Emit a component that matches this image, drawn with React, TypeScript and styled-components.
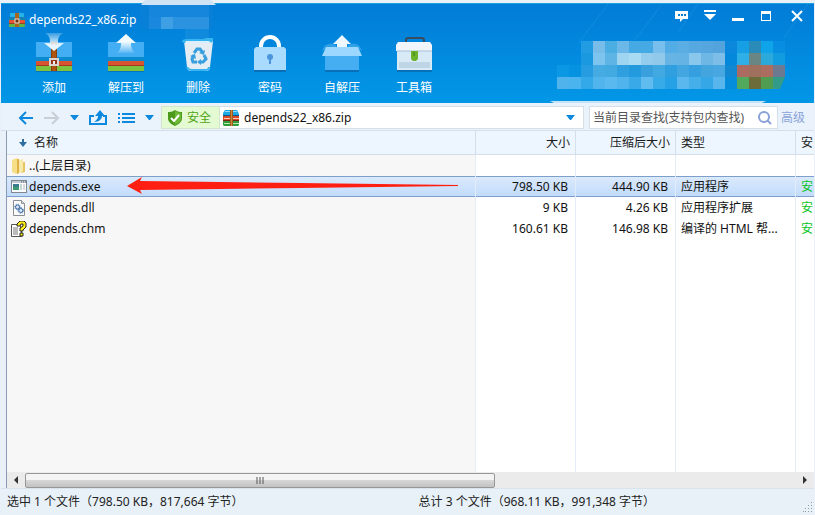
import React from "react";
import styled, { createGlobalStyle } from "styled-components";

const Global = createGlobalStyle`
  * { box-sizing: border-box; }
  html, body, #root { height: 100%; }
  body {
    margin: 0;
    background: #e9f0f8;
    font: 12px/20px "Noto Sans", "Noto Sans CJK SC", sans-serif;
    color: #1a1a1a;
  }
  button, input { font: inherit; color: inherit; border: 0; padding: 0; background: none; }
  svg { display: block; flex: none; }
`;

const Window = styled.div`
  min-height: 100vh;
  display: flex;
  flex-direction: column;
  padding: 3px 1px 0;
  overflow: hidden;
`;

const Header = styled.header`
  position: relative;
  height: 100px;
  flex: none;
  background: linear-gradient(#027cd7, #0297e6);
  border-top: 1px solid #1aa0e0;
  color: #fff;
`;

const HeaderArt = styled.svg<{ $side: "left" | "right" }>`
  position: absolute;
  top: -4px;
  ${(p) => (p.$side === "left" ? "left: 139px;" : "right: -1px;")}
  pointer-events: none;
`;

const TitleBar = styled.div`
  position: relative;
  display: flex;
  justify-content: space-between;
  padding-left: 8px;
  height: 29px;
`;

const Title = styled.h1`
  margin: 0;
  display: flex;
  align-items: center;
  gap: 4px;
  padding-top: 2px;
  font: inherit;
`;

const WindowButtons = styled.div`
  display: flex;
`;

const WindowButton = styled.button<{ $w?: number }>`
  width: ${(p) => p.$w ?? 28}px;
  height: 23px;
  display: grid;
  place-items: center;
`;

const Tools = styled.nav`
  position: relative;
  display: flex;
  padding-left: 17px;
`;

const Tool = styled.button`
  width: 72px;
  display: flex;
  flex-direction: column;
  align-items: center;
  gap: 3px;
`;

const PathBar = styled.div`
  display: flex;
  align-items: center;
  height: 28px;
  flex: none;
  padding: 3px 0 1px 17px;
  background: #eaf3fc;
  border-bottom: 1px solid #d5dfe9;
`;

const NavButtons = styled.div`
  width: 143px;
  display: flex;
  justify-content: space-between;
  padding-right: 7px;
`;

const NavButton = styled.button`
  height: 20px;
  display: grid;
  place-items: center;
`;

const Safe = styled.div`
  width: 59px;
  height: 23px;
  display: flex;
  align-items: center;
  gap: 4px;
  padding-left: 5px;
  background: #e3fad3;
  border: 1px solid #d3e6cd;
  color: #51a412;
`;

const Address = styled.div`
  flex: 1;
  min-width: 0;
  height: 23px;
  display: flex;
  align-items: center;
  gap: 5px;
  padding: 0 8px 0 3px;
  background: #fff;
  border: 1px solid #d5dfe9;
  border-left: 0;
`;

const AddressInput = styled.input`
  flex: 1;
  min-width: 0;
  color: #111;
  outline: 0;
`;

const Search = styled.label`
  width: 189px;
  height: 23px;
  margin-left: 5px;
  display: flex;
  align-items: center;
  padding: 0 5px 0 3px;
  background: #fff;
  border: 1px solid #d5dfe9;
`;

const SearchInput = styled.input`
  flex: 1;
  min-width: 0;
  outline: 0;
  &::placeholder { color: #555; opacity: 1; }
`;

const Advanced = styled.a`
  margin: 0 9px 0 3px;
  color: #8ba2d8;
  text-decoration: none;
`;

const Pane = styled.main`
  position: relative;
  flex: 1;
  display: flex;
  flex-direction: column;
  margin-left: 5px;
  border-left: 1px solid #8a9bb5;
  overflow: hidden;
  background: #fff;
`;

const Files = styled.table`
  flex: 1;
  width: 100%;
  display: flex;
  flex-direction: column;
`;

const Line = styled.tr<{ $kind?: "head" | "selected" | "fill" }>`
  display: grid;
  grid-template-columns: minmax(0, 1fr) 100px 100px 120px 18px;
  height: ${(p) => (p.$kind === "head" ? 24 : 21)}px;
  ${(p) => p.$kind === "head" && "background: #edf5fe; border-bottom: 1px solid #d5dfe9;"}
  ${(p) =>
    p.$kind === "selected" &&
    `background: linear-gradient(#dceafc, #c1dbfc);
     box-shadow: inset 0 1px #7d9fcc, inset 0 -1px #7d9fcc;`}
  ${(p) => p.$kind === "fill" && "height: auto; flex: 1;"}
`;

const Body = styled.tbody`
  flex: 1;
  display: flex;
  flex-direction: column;
`;

const HeadCell = styled.th<{ $right?: boolean }>`
  padding: 2px 5px 0;
  font-weight: 400;
  text-align: ${(p) => (p.$right ? "right" : "left")};
  border-right: 1px solid #d5dfe9;
  white-space: nowrap;
  &:last-child { border-right: 0; padding-right: 0; }
`;

const SortLabel = styled.span`
  display: flex;
  align-items: center;
  gap: 7px;
  padding-left: 7px;
`;

const Cell = styled.td<{ $right?: boolean; $shade?: boolean; $green?: boolean }>`
  padding: 1px ${(p) => (p.$right ? 7 : 5)}px 0;
  text-align: ${(p) => (p.$right ? "right" : "left")};
  background: ${(p) => (p.$shade ? "#f7f7f7" : "none")};
  color: ${(p) => (p.$green ? "#08c31c" : "#111")};
  border-right: 1px solid #e2ecf8;
  white-space: nowrap;
  &:last-child { border-right: 0; padding-right: 0; }
`;

const FileName = styled.span`
  display: flex;
  align-items: center;
  gap: 2px;
  margin-left: -1px;
  height: 20px;
`;

const Arrow = styled.svg`
  position: absolute;
  left: 119px;
  top: 46px;
`;

const ScrollBar = styled.div`
  display: flex;
  align-items: center;
  height: 16px;
  flex: none;
  background: #ebebeb;
`;

const ScrollButton = styled.button`
  width: 18px;
  height: 16px;
  display: grid;
  place-items: center;
`;

const Track = styled.div`
  flex: 1;
`;

const Thumb = styled.div`
  width: 61%;
  height: 15px;
  display: grid;
  place-items: center;
  border: 1px solid #979797;
  border-radius: 2px;
  background: linear-gradient(#f4f4f4 45%, #d6d6d6 50%, #c2c2c2);
`;

const Status = styled.footer`
  display: grid;
  grid-template-columns: 51% 1fr;
  position: relative;
  height: 27px;
  flex: none;
  padding: 3px 0 3px 6px;
  border-top: 1px solid #d8e3ee;
  color: #222;
  background: #e8f1f8;
`;

const StatusText = styled.span`
  white-space: nowrap;
`;

const Grip = styled.svg`
  position: absolute;
  right: 1px;
  bottom: 3px;
`;

const blue = "#0d8ae0";

const Box = ({ strap }: { strap?: boolean }) => (
  <g>
    <rect x="2" y="38" width="36" height="1" fill="#075fa8" opacity=".6" />
    <rect x="2" y="9" width="36" height="16" fill="#43aef3" />
    <rect x="2" y="24" width="36" height="4" fill="#0b8bcf" />
    <rect x="2" y="28" width="36" height="4" fill="#d8532f" />
    <rect x="2" y="32" width="36" height="1" fill="#a33a20" />
    <rect x="2" y="33" width="36" height="5" fill="#7dc43e" />
    {strap && (
      <>
        <rect x="17" y="9" width="6" height="29" fill="#ad5510" />
        <path d="M17 9h1v29h-1ZM22 9h1v29h-1Z" fill="#8a400c" />
        <rect x="16" y="26" width="8" height="6" fill="#94351c" stroke="#dcd6d2" strokeWidth="2" />
        <rect x="19" y="28" width="2" height="3" fill="#eee" />
      </>
    )}
  </g>
);

const toolIcons: Record<string, React.ReactNode> = {
  添加: (
    <>
      <Box strap />
      <path d="M11 0h18c-5 3-5 6-5 10h6L20 18 10 10h6c0-4 0-7-5-10Z" fill="url(#fadeDown)" />
    </>
  ),
  解压到: (
    <>
      <Box />
      <path d="M20 1 30 10h-5c0 5 1 7 4 10H11c3-3 4-5 4-10h-5Z" fill="url(#fadeUp)" />
    </>
  ),
  删除: (
    <>
      <path d="M6 8h29l-3 26q0 4-4 4H13q-4 0-4-4Z" fill="#e4edf4" />
      <path d="M9 34q1 3 5 3h13q4 0 4-3" fill="none" stroke="#38b4f0" strokeWidth="2" />
      <path d="M4 8q1-2 5-2h17l2-1h7v3q-1 2-4 2H8q-4 0-4-2Z" fill="#34b5f2" />
      <path d="M8 8h23l2 2H7Z" fill="#d7f0fc" />
      <g fill="none" stroke="#389fdf" strokeWidth="3">
        <path d="m16 20 3-4h3l3 4M26 22l2 4-3 3h-3M19 29h-4l-1-3 2-4" />
      </g>
      <path d="m27 17-1 5-5-2ZM23 26v6l-4-3ZM12 23l5-2 1 5Z" fill="#389fdf" />
    </>
  ),
  密码: (
    <>
      <path d="M11 15v-2a9 9 0 0 1 18 0v2" fill="none" stroke="#fff" strokeWidth="4" />
      <rect x="4" y="37" width="32" height="2" fill="#0870b8" />
      <path d="M6 14h28l2 2v21H4V16Z" fill="#a9dbff" />
      <circle cx="20" cy="24" r="3" fill="#4c94dc" />
      <path d="M19 25h2v6h-2Z" fill="#4c94dc" />
    </>
  ),
  自解压: (
    <>
      <path d="M0 18c2-7 8-9 14-6v4h12v-4c6-3 12-1 14 6l-5-3H6Z" fill="#3fa9ec" opacity=".75" />
      <path d="M20 2 29 11h-4v4H15v-4h-4Z" fill="#ecf7ff" />
      <rect x="3" y="22" width="34" height="15" fill="#45adf1" />
      <rect x="3" y="37" width="34" height="2" fill="#0870b8" />
      <path d="M4 14h32l4 9H0Z" fill="#9bd7ff" />
    </>
  ),
  工具箱: (
    <>
      <path d="M12 10V7q0-2 2-2h14q2 0 2 2v3" fill="none" stroke="#3b4c5e" strokeWidth="2" />
      <path d="M4 9h32l2 3v6H2v-6Z" fill="#f0f6fb" />
      <rect x="3" y="18" width="35" height="19" fill="#d9eaf7" />
      <path d="M3 18h35M5 30h31M5 32h31M5 34h31" stroke="#a4bfd6" />
      <path d="M17 18h7v8l-2 2h-3l-2-2Z" fill="#6bb32b" />
      <path d="M20 19v4" stroke="#3e7d14" />
      <rect x="3" y="37" width="35" height="2" fill="#0870b8" />
    </>
  ),
};

const ArchiveIcon = () => (
  <svg width="16" height="16" viewBox="0 0 16 16">
    <rect x="1" y="1" width="14" height="6" rx="1" fill="#25b3ea" />
    <rect y="5" width="16" height="3" fill="#1582b4" />
    <rect y="8" width="16" height="3" fill="#e2552f" />
    <rect y="11" width="16" height="1" fill="#93402b" />
    <rect y="12" width="16" height="3" rx="1" fill="#5fb545" />
    <rect x="6" y="1" width="4" height="14" fill="#a8651f" />
    <rect x="6" y="7" width="4" height="4" fill="#713315" stroke="#eadfd2" />
  </svg>
);

const BooksIcon = () => (
  <svg width="16" height="16" viewBox="0 0 16 16">
    <path d="M2 0h12l2 4v2H0V3Z" fill="#1fa8e6" />
    <path d="M2 1h12v1H2Z" fill="#8fe0fb" />
    <path d="M0 5h16v1H0Z" fill="#0d567f" />
    <path d="M0 6h16v5H0Z" fill="#d9492b" />
    <path d="M1 8h15v1H1Z" fill="#f6c9b4" />
    <path d="M0 10h16v1H0Z" fill="#7d2316" />
    <path d="M0 11h16v4l-1 1H1l-1-1Z" fill="#2f9d3d" />
    <path d="M1 13h15v1H1Z" fill="#bfe8a8" />
    <path d="M7 0h3v16H7Z" fill="#9c5a1c" />
    <path d="M8 0h1v16H8Z" fill="#c98a3c" />
  </svg>
);

const Caret = () => (
  <svg width="9" height="5"><path d="M0 0h9L5 5H4Z" fill={blue} /></svg>
);

const fileIcons: Record<string, React.ReactNode> = {
  folder: (
    <>
      <path d="M1 2 6 0l2 2v13l-3 1-4-2Z" fill="#f7df88" />
      <path d="M6 1h2v14l-2 1Z" fill="#dcb248" />
      <path d="M8 2 12 1v13l-4 1Z" fill="#f9e9a9" />
      <path d="M12 4h2v10l-4 1 2-2Z" fill="#e6c661" />
    </>
  ),
  exe: (
    <>
      <rect x=".5" y="1.5" width="15" height="12" fill="#fff" stroke="#7f8791" />
      <path d="M1 3h14" stroke="#c3cad2" strokeWidth="2" />
      <path d="M10 3h1M12 3h1M14 3h1" stroke="#4c5b6c" />
      <path d="M2 5h6v6H2Z" fill="#3a7d90" />
      <path d="M2 8h6v3H2Z" fill="#3c9a6c" />
      <path d="M9 6h2M9 8h2M9 10h2" stroke="#8aa" />
      <path d="M12 5h2v6h-2Z" fill="#d5d9de" />
    </>
  ),
  dll: (
    <>
      <path d="M2.5 .5h8l3 3v12h-11Z" fill="#fbfbfb" stroke="#8b8f94" />
      <path d="M10.5 .5v3h3" fill="#ddd" stroke="#8b8f94" />
      <circle cx="6.5" cy="7" r="2" fill="#dbe7f4" stroke="#3e6ea8" />
      <circle cx="6.5" cy="7" r="2.8" fill="none" stroke="#3e6ea8" strokeDasharray="1 1.2" />
      <circle cx="9.800" cy="10.500" r="2" fill="#dbe7f4" stroke="#3e6ea8" />
      <circle cx="9.800" cy="10.500" r="2.800" fill="none" stroke="#3e6ea8" strokeDasharray="1 1.2" />
    </>
  ),
  chm: (
    <>
      <path d="M.5 3.500h7l3 3v9H.5Z" fill="#fff" stroke="#555" />
      <path d="M2 7h5M2 9h5M2 11h5M2 13h5" stroke="#777" />
      <path d="M6 5V3l3-3h4l2 2v4l-3 3v1H9V7l3-2V3h-2L9 5ZM9 12h3v3H9Z" fill="#ffec14" stroke="#222" />
    </>
  ),
};

const files = [
  { icon: "folder", name: "..(上层目录)", size: "", packed: "", type: "", safe: "" },
  { icon: "exe", name: "depends.exe", size: "798.50 KB", packed: "444.90 KB", type: "应用程序", safe: "安", selected: true },
  { icon: "dll", name: "depends.dll", size: "9 KB", packed: "4.26 KB", type: "应用程序扩展", safe: "安" },
  { icon: "chm", name: "depends.chm", size: "160.61 KB", packed: "146.98 KB", type: "编译的 HTML 帮...", safe: "安" },
];

const mosaic = [
  ["", "", "#219be1", "#78bde9", "#4baee2", "#6bb8e9", "#45a9e4", "#45a9e4", "#78bfed", "#52ace5", "#5aaee4", "#55a8e0", "#55a6de", "#53a4dc", "#0b87db", "#169fe5", "#2b8bb8", "#0fa3ea", "#078ee1"],
  ["", "", "#1a99e0", "#7dc5ee", "#5eb4e5", "#a0d5f1", "#a9dcf3", "#94ccee", "#91c9ea", "#66b4e4", "#65b3e4", "#8ac7ec", "#6eb6e4", "#7dbde7", "#0488dc", "#2eb0e7", "#6a8684", "#2ba9da", "#119ce0"],
  ["#0a97e3", "#0593e1", "#259de0", "#45abe2", "#43a9e1", "#2f9fe0", "#2399de", "#399fdd", "#42a8e1", "#2f9fe0", "#42a7e1", "#369fdf", "#43a4de", "#48a6e0", "#1288d0", "#ac6b61", "#9f705e", "#ac6c5f", "#6c7991"],
  ["#51b3ec", "#4bb3ed", "#34a9e9", "#51b4ec", "#5ab9ee", "#50b3eb", "#39a9e8", "#60bbee", "#37aae8", "#26a1e5", "#5bb8ee", "#45afea", "#35a6e6", "#59b6ed", "#058ddc", "#52a85c", "#6c6b3a", "#509d51", "#339b87"],
];

export default function App() {
  return (
    <Window>
      <Global />
      <Header>
        <HeaderArt $side="left" width="90" height="50">
          <path d="M1 5 5 0h66l5 5Z" fill="#cfe3f4" />
          <path d="M-2 5h75v24h-3v12H57V29H-2Z" fill="#0880d8" />
          <path d="M9 5h60v12H9Z" fill="#1586db" />
          <path d="M9 17h12v12H9Z" fill="#1a88dc" />
          <path d="M21 17h12v12H21Z" fill="#3f9fe4" />
          <path d="M33 17h36v12H33Z" fill="#2b93e0" />
          <path d="M45 29h24v12H45Z" fill="#108adc" />
        </HeaderArt>
        <HeaderArt $side="right" width="275" height="110">
          <g stroke="#2ba1e8" opacity=".35">
            <path d="m68 4-30 40M122 4 92 44M158 4l-20 28M268 4l-24 34" />
          </g>
          {mosaic.map((row, y) =>
            row.map((c, x) =>
              c ? <rect key={`${x}-${y}`} x={17 + x * 12} y={41 + y * 12} width="12" height="12" fill={c} /> : null,
            ),
          )}
          <path d="M245 77v12h-5Z" fill="#0291e1" />
          <path d="M10 101h216l-4 2H14Z" fill="#c7e3f6" />
        </HeaderArt>
        <TitleBar>
          <Title>
            <ArchiveIcon />
            depends22_x86.zip
          </Title>
          <WindowButtons>
            <WindowButton aria-label="反馈">
              <svg width="13" height="12"><path d="M0 1h13v8H8l-3 3V9H0Z" fill="#fff" /><path d="M3 5h2M6 5h2M9 5h2" stroke="#0880d8" strokeWidth="2" /></svg>
            </WindowButton>
            <WindowButton $w={29} aria-label="菜单">
              <svg width="12" height="11"><path d="M0 0h12v2H0ZM0 4h12l-6 6Z" fill="#fff" /></svg>
            </WindowButton>
            <WindowButton aria-label="最小化">
              <svg width="12" height="11"><path d="M0 8h12v3H0Z" fill="#fff" /></svg>
            </WindowButton>
            <WindowButton aria-label="最大化">
              <svg width="10" height="10"><path d="M0 0h10v10H0ZM1 3v6h8V3Z" fillRule="evenodd" fill="#fff" /></svg>
            </WindowButton>
            <WindowButton $w={34} aria-label="关闭">
              <svg width="12" height="12"><path d="m1 1 10 10M11 1 1 11" stroke="#fff" strokeWidth="2" /></svg>
            </WindowButton>
          </WindowButtons>
        </TitleBar>
        <Tools>
          <svg width="0" height="0">
            <defs>
              <linearGradient id="fadeDown" x2="0" y2="1"><stop stopColor="#fff" stopOpacity=".2" /><stop offset=".7" stopColor="#e8f6ff" /></linearGradient>
              <linearGradient id="fadeUp" x2="0" y2="1"><stop offset=".4" stopColor="#f4fbff" /><stop offset="1" stopColor="#fff" stopOpacity=".1" /></linearGradient>
            </defs>
          </svg>
          {Object.keys(toolIcons).map((name) => (
            <Tool key={name}>
              <svg width="40" height="42">{toolIcons[name]}</svg>
              {name}
            </Tool>
          ))}
        </Tools>
      </Header>

      <PathBar>
        <NavButtons>
          <NavButton aria-label="后退">
            <svg width="16" height="14" fill="none" stroke={blue} strokeWidth="2"><path d="M2 7h13M8 1 2 7l6 6" /></svg>
          </NavButton>
          <NavButton aria-label="前进">
            <svg width="16" height="14" fill="none" stroke="#c8ced5" strokeWidth="2"><path d="M0 7h14M8 1l6 6-6 6" /></svg>
          </NavButton>
          <NavButton aria-label="历史"><Caret /></NavButton>
          <NavButton aria-label="上一级">
            <svg width="19" height="15"><path d="M5 6H1v8h16V6h-3" fill="none" stroke={blue} strokeWidth="2" /><path d="M5 12c3-2 4-4 4-6H6l5-6 5 6h-3c0 3-3 6-8 6Z" fill={blue} /></svg>
          </NavButton>
          <NavButton aria-label="查看">
            <svg width="17" height="12" stroke={blue} strokeWidth="2"><path d="M0 2h2M4 2h13M0 6h2M4 6h13M0 10h2M4 10h13" /></svg>
          </NavButton>
          <NavButton aria-label="查看方式"><Caret /></NavButton>
        </NavButtons>
        <Safe>
          <svg width="16" height="16"><path d="M8 0c3 2 5 2 7 2v6c0 4-3 6-7 8-4-2-7-4-7-8V2c2 0 4 0 7-2Z" fill="#4c9a1c" /><path d="M8 1c2 1 4 2 6 2v5c0 3-2 5-6 7Z" fill="#6cba34" /><path d="m4 8 3 3 5-6" fill="none" stroke="#fff" strokeWidth="2" /></svg>
          安全
        </Safe>
        <Address>
          <BooksIcon />
          <AddressInput aria-label="路径" defaultValue="depends22_x86.zip" />
          <Caret />
        </Address>
        <Search>
          <SearchInput aria-label="查找" placeholder="当前目录查找(支持包内查找)" />
          <svg width="14" height="14" fill="none" stroke="#8ba2d8" strokeWidth="2"><circle cx="6" cy="6" r="5" /><path d="m9 9 4 4" /></svg>
        </Search>
        <Advanced href="#advanced">高级</Advanced>
      </PathBar>

      <Pane>
        <Files>
          <thead>
            <Line $kind="head">
              <HeadCell>
                <SortLabel>
                  <svg width="8" height="8"><path d="M3 0h2v3h3L4 8 0 3h3Z" fill="#2b6e9f" /></svg>
                  名称
                </SortLabel>
              </HeadCell>
              <HeadCell $right>大小</HeadCell>
              <HeadCell $right>压缩后大小</HeadCell>
              <HeadCell>类型</HeadCell>
              <HeadCell>安</HeadCell>
            </Line>
          </thead>
          <Body>
            {files.map((f) => (
              <Line key={f.name} $kind={f.selected ? "selected" : undefined}>
                <Cell $shade={!f.selected}>
                  <FileName>
                    <svg width="16" height="16">{fileIcons[f.icon]}</svg>
                    {f.name}
                  </FileName>
                </Cell>
                <Cell $right>{f.size}</Cell>
                <Cell $right>{f.packed}</Cell>
                <Cell>{f.type}</Cell>
                <Cell $green>{f.safe}</Cell>
              </Line>
            ))}
            <Line $kind="fill">
              <Cell $shade />
              <Cell />
              <Cell />
              <Cell />
              <Cell />
            </Line>
          </Body>
        </Files>
        <Arrow width="333" height="18">
          <path d="M1 9 16 0l-2 4 80 1 80 1 158 2v1l-158 2-80 1-80 1 2 4Z" fill="#ff1f12" />
        </Arrow>
        <ScrollBar>
          <ScrollButton aria-label="向左滚动"><svg width="4" height="8"><path d="M4 0v8L0 4Z" fill="#333" /></svg></ScrollButton>
          <Track>
            <Thumb><svg width="9" height="7"><path d="M1 0v7M4 0v7M7 0v7" stroke="#555" /></svg></Thumb>
          </Track>
          <ScrollButton aria-label="向右滚动"><svg width="4" height="8"><path d="M0 0v8l4-4Z" fill="#333" /></svg></ScrollButton>
        </ScrollBar>
      </Pane>

      <Status>
        <StatusText>选中 1 个文件（798.50 KB，817,664 字节）</StatusText>
        <StatusText>总计 3 个文件（968.11 KB，991,348 字节）</StatusText>
        <Grip width="10" height="10" fill="#8f9ba8">
          <path d="M8 0h1v1H8ZM5 3h1v1H5ZM8 3h1v1H8ZM2 6h1v1H2ZM5 6h1v1H5ZM8 6h1v1H8ZM0 9h1v1H0ZM2 9h1v1H2ZM5 9h1v1H5ZM8 9h1v1H8Z" />
        </Grip>
      </Status>
    </Window>
  );
}
